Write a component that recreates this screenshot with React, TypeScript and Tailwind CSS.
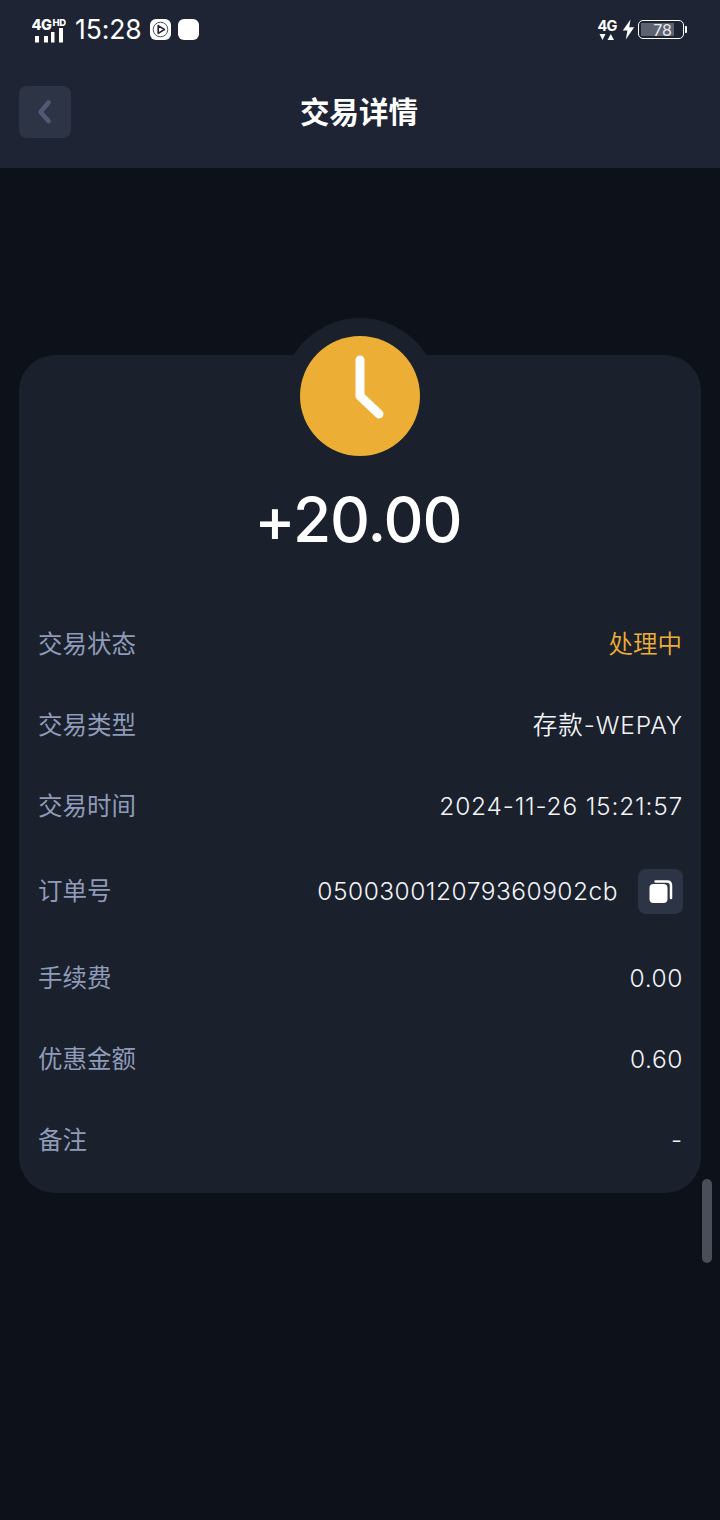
import { Fragment } from "react";

const FONT = "font-['Inter','Noto_Sans_CJK_SC',sans-serif]";

interface Row {
  label: string;
  value: string;
  tone?: string;
  size?: string;
  spacing?: string;
  copy?: boolean;
}

const ROWS: Row[] = [
  { label: "交易状态", value: "处理中", tone: "text-[#edae35]" },
  { label: "交易类型", value: "存款-WEPAY", spacing: "mr-[-1px] tracking-[0.9px]" },
  { label: "交易时间", value: "2024-11-26 15:21:57", spacing: "mr-[-1px] tracking-[0.8px]", size: "h-[80px]" },
  { label: "订单号", value: "050030012079360902cb", spacing: "tracking-[0.5px]", size: "mb-[2px] h-[90px]", copy: true },
  { label: "手续费", value: "0.00", spacing: "mr-[-1px] tracking-[0.6px]" },
  { label: "优惠金额", value: "0.60", spacing: "mr-[-1px] tracking-[0.6px]" },
  { label: "备注", value: "-" },
];

function StatusBar() {
  return (
    <div className="flex h-[58px] items-center justify-between pl-[32px] pr-[33px] pt-[1px] text-white">
      <div className="flex items-center">
        <svg width="34" height="26" viewBox="0 0 34 26" fill="white" aria-hidden="true">
          <text x="-0.5" y="12.5" fontSize="14.5" fontWeight="800" letterSpacing="-0.6" fontFamily="Inter, sans-serif">4G</text>
          <text x="20.5" y="8.5" fontSize="9.5" fontWeight="800" letterSpacing="-0.4" fontFamily="Inter, sans-serif">HD</text>
          <rect x="3" y="19" width="4" height="6.5" />
          <rect x="12" y="19" width="4" height="6.5" />
          <rect x="19" y="15" width="3.5" height="10.5" />
          <rect x="27" y="11" width="4" height="14.5" />
        </svg>
        <span className="ml-[9px] text-[26.5px] leading-none tracking-[-0.1px]">15:28</span>
        <div className="ml-[8px] flex h-[21px] w-[21px] items-center justify-center rounded-[6px] bg-white">
          <svg width="17" height="17" viewBox="0 0 17 17" aria-hidden="true">
            <circle cx="8.5" cy="8.5" r="7.3" fill="none" stroke="#4b4f57" strokeWidth="1" />
            <path d="M6.2 4.6 L12.4 8.5 L6.2 12.4 Z" fill="none" stroke="#22262e" strokeWidth="1.6" strokeLinejoin="round" />
          </svg>
        </div>
        <div className="ml-[7px] h-[21px] w-[21px] rounded-[6px] bg-white" />
      </div>
      <div className="flex items-center">
        <svg width="22" height="24" viewBox="0 0 22 24" fill="white" aria-hidden="true">
          <text x="1.5" y="13" fontSize="14.5" fontWeight="700" letterSpacing="-0.8" fontFamily="Inter, sans-serif">4G</text>
          <path d="M3.5 16h6l-3 6z" />
          <path d="M11.5 22h6.5l-3.2-6z" />
        </svg>
        <svg className="ml-[4px]" width="13" height="21" viewBox="0 0 13 21" fill="white" aria-hidden="true">
          <path d="M8.5 0.5 L0.8 11.5 H5.4 L3.8 20.5 L12.2 8.2 H7.2 Z" />
        </svg>
        <div className="ml-[3px] flex h-[19px] w-[46px] items-center rounded-[5px] border border-white p-[2px]">
          <div className="flex h-full w-[33px] items-center justify-center bg-[#5d6270] pl-[10px] text-[16px] leading-none text-[#e6e8ec]">
            78
          </div>
        </div>
        <div className="ml-[1px] h-[7px] w-[2px] rounded-r-[1px] bg-white" />
      </div>
    </div>
  );
}

function Header() {
  return (
    <header className="bg-[#1e2433]">
      <StatusBar />
      <div className="relative flex h-[110px] items-start px-[19px] pt-[28px]">
        <button type="button" className="flex h-[52px] w-[52px] items-center justify-center rounded-[8px] bg-[#2c3445]">
          <svg width="18" height="26" viewBox="0 0 18 26" fill="none" aria-hidden="true">
            <path d="M12.5 3.5 L4.5 13 L12.5 22" stroke="#505b72" strokeWidth="4.6" strokeLinecap="round" strokeLinejoin="round" />
          </svg>
        </button>
        <h1 className="flex-1 pr-[54px] pt-[8px] text-center text-[29.5px] font-bold leading-[36px] text-white">交易详情</h1>
      </div>
    </header>
  );
}

function Card() {
  return (
    <section className="relative mx-[19px] mt-[187px] h-[838px] rounded-[36px] bg-[#1a202c] px-[19px]">
      <div className="absolute left-1/2 top-[-37px] flex h-[156px] w-[156px] -translate-x-1/2 items-center justify-center rounded-full bg-[#1a202c]">
        <div className="flex h-[120px] w-[120px] items-center justify-center rounded-full bg-[#edae35]">
          <svg width="120" height="120" viewBox="0 0 120 120" fill="none" aria-hidden="true">
            <path d="M60 24 V60 L79 78" stroke="white" strokeWidth="9" strokeLinecap="round" strokeLinejoin="round" />
          </svg>
        </div>
      </div>
      <div className="pr-[4px] pt-[125px] text-center text-[62px] font-medium leading-[80px] tracking-[-1px] text-white">+20.00</div>
      <dl className="mt-[44px] grid grid-cols-[auto_1fr] items-center text-[24.5px] font-[350]">
        {ROWS.map((row) => {
          const size = row.size ?? "h-[81px]";
          return (
            <Fragment key={row.label}>
              <dt className={`flex items-center font-normal text-[#8f9bb8] ${size}`}>{row.label}</dt>
              <dd className={`flex items-center justify-end ${size} ${row.spacing ?? ""} ${row.tone ?? "text-[#f2f4f7]"}`}>
                {row.value}
                {row.copy && (
                  <button type="button" className="ml-[20px] mr-[-1px] flex h-[45px] w-[45px] items-center justify-center rounded-[8px] bg-[#2c3445]">
                    <svg width="24" height="24" viewBox="0 0 24 24" fill="none" aria-hidden="true">
                      <path d="M6.5 2.5 H18 Q22 2.5 22 6.5 V19" stroke="white" strokeWidth="2.5" strokeLinecap="round" />
                      <rect x="0.5" y="5" width="18" height="19" rx="4" fill="white" />
                    </svg>
                  </button>
                )}
              </dd>
            </Fragment>
          );
        })}
      </dl>
    </section>
  );
}

export default function App() {
  return (
    <div className={`relative h-[1520px] w-[720px] overflow-hidden bg-[#0d1119] ${FONT}`}>
      <Header />
      <Card />
      <div className="absolute left-[702px] top-[1179px] h-[84px] w-[10px] rounded-full bg-[#4a4e59]" />
    </div>
  );
}
